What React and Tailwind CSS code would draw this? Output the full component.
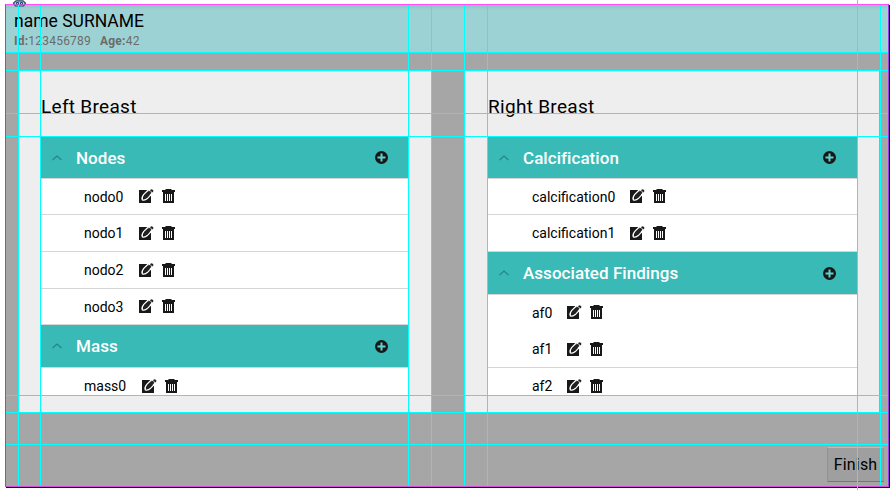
const verticalGuides = [
  'left-[18px] top-[5px] h-[481px]',
  'left-[40px] top-[5px] h-[481px]',
  'left-[408px] top-[5px] h-[481px]',
  'left-[431px] top-[5px] h-[481px]',
  'left-[464px] top-[5px] h-[481px]',
  'left-[487px] top-[5px] h-[481px]',
  'left-[857px] top-0 h-[490px]',
  'left-[880px] top-[5px] h-[480px]',
];

const horizontalGuides = [
  'top-[52px]',
  'top-[70px]',
  'top-[113px]',
  'top-[136px]',
  'top-[395px]',
  'top-[412px]',
  'top-[444px]',
];

function EditIcon() {
  return (
    <svg className="h-[15px] w-[15px] shrink-0" viewBox="0 0 15 15">
      <path d="M0 1h12v13H0z" fill="#181818" />
      <path d="M9 0h3.500l-1 2.500L13 7h-2z" fill="#fff" />
      <path d="M9.300 1 4.800 5.400Q2.300 8.500 3.300 10.800q2.500.9 5-1.200L12 5.600" fill="none" stroke="#fff" strokeWidth="1.300" />
      <path d="M4.600 9.600q0-2.300 1.500-3.900L10.400 1.700l2.100 2.100-4.200 4.400q-1.500 1.500-3.700 1.400z" fill="#222" />
      <path d="m11 1.200.9-.8q.7-.5 1.800.4t.5 1.800l-.8.900z" fill="#222" />
    </svg>
  );
}

function TrashIcon() {
  return (
    <svg className="h-[15px] w-[13px] shrink-0" viewBox="0 0 13 15">
      <path d="M3.500 0h6v1H13v2H0V1h3.500zM1 3h11v11H1z" fill="#181818" />
      <path d="M3.500 5v7M5.500 5v7M7.500 5v7M9.500 5v7" stroke="#fff" />
    </svg>
  );
}

function Section({ title, size = 'h-[43px]', children }) {
  return (
    <section>
      <header className={`flex items-center border-b border-[#d5d5d5] bg-[#39bab6] pr-[21px] ${size}`}>
        <svg className="ml-[11px] h-[6px] w-[10px]" viewBox="0 0 10 6">
          <path d="M.5 5 5 1l4.500 4" fill="none" stroke="#258582" strokeWidth="1.100" />
        </svg>
        <h2 className="ml-[14px] flex-1 pt-px text-[17px] font-medium leading-none tracking-[0.05px] text-white">{title}</h2>
        <svg className="h-[13px] w-[13px]" viewBox="0 0 13 13">
          <circle cx="6.500" cy="6.500" r="6.500" fill="#181818" />
          <path d="M6.500 2.500v8M2.500 6.500h8" stroke="#5cd3cd" strokeWidth="2" />
        </svg>
      </header>
      {children}
    </section>
  );
}

function Row({ name, size = 'h-[37px]', line = true, indent = 'pl-[43px]', gap = 'ml-[15.5px]' }) {
  return (
    <div className={`flex items-center border-b bg-white ${indent} ${size} ${line ? 'border-[#d5d5d5]' : 'border-white'}`}>
      <span className="text-[14px] leading-none text-black">{name}</span>
      <span className={`flex items-center gap-2 ${gap}`}>
        <EditIcon />
        <TrashIcon />
      </span>
    </div>
  );
}

function Panel({ title, className, children }) {
  return (
    <section className={`h-[342px] bg-[#eee] ${className}`}>
      <h1 className="h-[67px] pt-[25px] text-[19px] leading-[24px] tracking-[0.3px] text-black">{title}</h1>
      <div className="h-[258px] overflow-hidden bg-white">{children}</div>
    </section>
  );
}

export default function App() {
  return (
    <div className="relative h-[490px] w-[895px] overflow-hidden bg-white pl-[5px] pt-[4px] font-['Roboto',sans-serif]">
      <main className="h-[483px] w-[884px] border border-b-[#d94be0] border-l-[#a03cf0] border-r-[#a03cf0] border-t-[#ff4df8] bg-[#a6a6a6] shadow-[1px_1px_0_#000]">
        <header className="h-[48px] bg-linear-to-b from-[#91c5c6] to-[#9dd2d4] to-10% pl-[8px] pt-[6px]">
          <div className="text-[17.5px] leading-[20px] text-black">name SURNAME</div>
          <div className="flex gap-[9px] text-[12px] leading-[20px] tracking-[0.22px] text-[#6b6b6b]">
            <span><b>Id:</b>123456789</span>
            <span><b>Age:</b>42</span>
          </div>
        </header>
        <div className="flex pl-[13px] pt-[17px]">
          <Panel title="Left Breast" className="w-[412px] pl-[22px] pr-[22px]">
            <Section title="Nodes" size="h-[42px]">
              <Row name="nodo0" size="h-[36px]" />
              <Row name="nodo1" />
              <Row name="nodo2" />
              <Row name="nodo3" size="h-[36px]" />
            </Section>
            <Section title="Mass">
              <Row name="mass0" />
            </Section>
          </Panel>
          <Panel title="Right Breast" className="ml-[34px] w-[414px] pl-[23px] pr-[22px]">
            <Section title="Calcification" size="h-[42px]">
              <Row name="calcification0" size="h-[36px]" indent="pl-[44px]" gap="ml-[15px]" />
              <Row name="calcification1" indent="pl-[44px]" gap="ml-[15px]" />
            </Section>
            <Section title="Associated Findings">
              <Row name="af0" size="h-[36px]" line={false} indent="pl-[44px]" gap="ml-[15px]" />
              <Row name="af1" indent="pl-[44px]" gap="ml-[15px]" />
              <Row name="af2" indent="pl-[44px]" gap="ml-[15px]" />
            </Section>
          </Panel>
        </div>
        <div className="flex justify-end pr-[4px] pt-[35px]">
          <button className="h-[35px] w-[57px] border border-[#929292] border-b-[#777] border-t-[#bcbcbc] bg-[#9f9f9f] pt-px text-[16px] tracking-[0.2px] text-black">Finish</button>
        </div>
      </main>
      <svg className="absolute left-[12px] top-0 h-[8px] w-[15px]" viewBox="0 0 15 8" fill="none">
        <path d="M4 .8h7l2.500 2.200-2 3H3.500l-2-3z" fill="#b9cee5" stroke="#26456c" strokeWidth="1.200" />
        <path d="M4.500 2.500h2v2h-2zM8.500 2.500h2v2h-2z" stroke="#26456c" />
        <path d="M1 4.500h13" stroke="#d35be0" strokeOpacity=".6" />
      </svg>
      {verticalGuides.map((place) => (
        <i key={place} className={`absolute w-px bg-[#00ffff] ${place}`} />
      ))}
      {horizontalGuides.map((place) => (
        <i key={place} className={`absolute left-[6px] h-px w-[882px] bg-[#00ffff] ${place}`} />
      ))}
    </div>
  );
}
